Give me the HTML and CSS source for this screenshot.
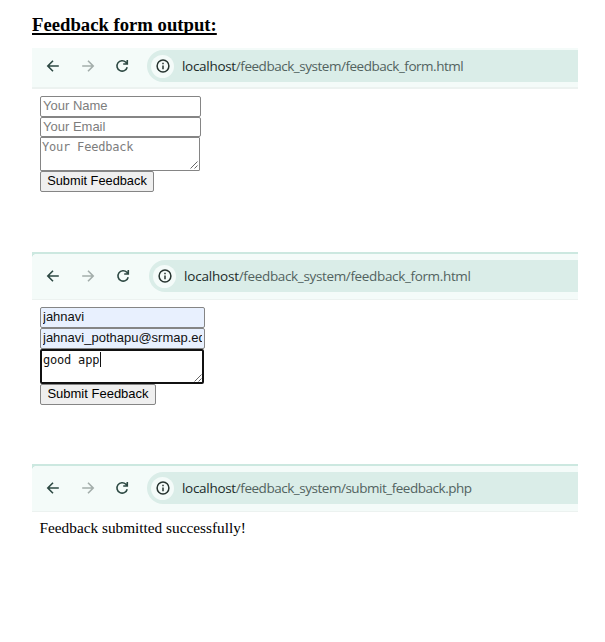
FILE: index.html
```html
<!DOCTYPE html>
<html lang="en">
<head>
<meta charset="utf-8">
<title>Feedback form output</title>
<link rel="stylesheet" href="styles.css">
</head>
<body>
<svg width="0" height="0" class="defs">
  <symbol id="back" viewBox="0 0 14 14"><path d="M12.8 7H2M7 1.8 1.8 7 7 12.2"/></symbol>
  <symbol id="forward" viewBox="0 0 14 14"><path d="M1.2 7H12M7 1.8 12.2 7 7 12.2"/></symbol>
  <symbol id="reload" viewBox="0 0 14 14"><path d="M12.2 8.2A5.2 5.2 0 1 1 10.9 3.3L12 4.4M12.3 1V5H8.2"/></symbol>
  <symbol id="info" viewBox="0 0 14 14"><circle cx="7" cy="7" r="5.9"/><path d="M7 6.4V10.2M7 3.8V5.2"/></symbol>
  <symbol id="grip" viewBox="0 0 8 8"><path d="M.5 7.5 7.5.5M4.5 7.5 7.5 4.5"/></symbol>
</svg>
<h1>Feedback form output:</h1>

<section class="shot first">
  <header class="bar">
    <svg class="icon"><use href="#back"/></svg>
    <svg class="icon off"><use href="#forward"/></svg>
    <svg class="icon"><use href="#reload"/></svg>
    <div class="address"><span class="badge"><svg class="icon"><use href="#info"/></svg></span><span class="url"><b>localhost</b>/feedback_system/feedback_form.html</span></div>
  </header>
  <form>
    <input type="text" placeholder="Your Name">
    <input type="text" placeholder="Your Email">
    <div class="area"><textarea placeholder="Your Feedback"></textarea><svg class="grip"><use href="#grip"/></svg></div>
    <button type="button">Submit Feedback</button>
  </form>
</section>

<section class="shot second">
  <header class="bar">
    <svg class="icon"><use href="#back"/></svg>
    <svg class="icon off"><use href="#forward"/></svg>
    <svg class="icon"><use href="#reload"/></svg>
    <div class="address"><span class="badge"><svg class="icon"><use href="#info"/></svg></span><span class="url"><b>localhost</b>/feedback_system/feedback_form.html</span></div>
  </header>
  <form>
    <input type="text" value="jahnavi">
    <input type="text" value="jahnavi_pothapu@srmap.edu.in">
    <div class="area"><textarea>good app</textarea><span class="caret"></span><svg class="grip"><use href="#grip"/></svg></div>
    <button type="button">Submit Feedback</button>
  </form>
</section>

<section class="shot third">
  <header class="bar">
    <svg class="icon"><use href="#back"/></svg>
    <svg class="icon off"><use href="#forward"/></svg>
    <svg class="icon"><use href="#reload"/></svg>
    <div class="address"><span class="badge"><svg class="icon"><use href="#info"/></svg></span><span class="url"><b>localhost</b>/feedback_system/submit_feedback.php</span></div>
  </header>
  <p>Feedback submitted successfully!</p>
</section>
</body>
</html>
```
FILE: styles.css
```css
* { box-sizing: border-box; }
body { margin: 0; padding: 14px 27px 0 32px; height: 642px; background: #fff; overflow: hidden; }
.defs { position: absolute; }
h1 {
  margin: 0 0 12px; height: 22px;
  font: bold 18.7px/22px "Liberation Serif", serif;
  text-decoration: underline; text-decoration-thickness: 2px; text-underline-offset: 2px;
  text-decoration-skip-ink: none; color: #000;
}
.first { height: 204px; }
.second { height: 212px; }
.bar {
  display: flex; align-items: flex-start; height: 41px;
  padding: 2px 0 0 14px; background: #f4fbf9; border-bottom: 2px solid #ecf2f0;
}
.second .bar, .third .bar {
  height: 48px; padding-top: 6px;
  border-top: 2px solid #cce8e0; border-bottom-width: 1px;
  background: radial-gradient(circle at 100% 100%, #f4fbf9 5px, #cce8e0 5.5px) 0 0 / 5px 5px no-repeat, #f4fbf9;
}
.icon {
  flex: none; width: 14px; height: 14px; margin: 8.5px 20.5px 0 0;
  fill: none; stroke: #2d4943; stroke-width: 1.6;
}
.off { stroke: #a3aeab; }
.address {
  flex: 1; display: flex; align-items: center; height: 32px; margin-left: 5px;
  padding-left: 4px; background: #daede8; border-radius: 16px 0 0 16px;
}
.badge {
  display: flex; align-items: center; justify-content: center;
  width: 23px; height: 23px; border-radius: 50%; background: #f4fbf9;
}
.icon:nth-child(3) { margin-right: 13px; }
.badge .icon { margin: 0; stroke: #26332f; stroke-width: 1.5; }
.url {
  margin-left: 8px; font: 13.5px/20px "Open Sans", sans-serif;
  letter-spacing: -.475px; white-space: nowrap; color: #52635f;
}
.url b { font-weight: 400; letter-spacing: -.3px; color: #202b28; }
.second .icon { margin-right: 21px; }
.second .icon:nth-child(3) { margin-right: 14px; }
.second .badge .icon { margin: 0; }
.second .url { letter-spacing: -.35px; }
.second .url b { letter-spacing: -.2px; }
form { display: flex; flex-direction: column; align-items: flex-start; padding: 7px 0 0 8px; }
input {
  width: 161px; height: 21px; padding: 0 2px 2px; margin: 0;
  border: 1px solid #858585; border-radius: 2px; background: #fff;
  font: 13px/17px "Liberation Sans", sans-serif; color: #111; outline: none;
}
input + input { height: 20px; }
input::placeholder, textarea::placeholder { color: #7d7d7d; opacity: 1; }
.area { position: relative; width: 160px; height: 34px; }
textarea {
  display: block; width: 100%; height: 100%; margin: 0; padding: 2px;
  border: 1px solid #858585; border-radius: 1px; resize: none; overflow: hidden; outline: none;
  font: 12px/15px "DejaVu Sans Mono", monospace; letter-spacing: -.2px; color: #111;
}
.first textarea { padding-left: 1px; }
.grip { position: absolute; right: 2px; bottom: 2px; width: 8px; height: 8px; fill: none; stroke: #666; }
button {
  width: 114px; height: 21px; margin: 0; padding: 0 0 2px; white-space: nowrap;
  border: 1px solid #858585; border-radius: 2px; background: #efefef;
  font: 12.8px/17px "Liberation Sans", sans-serif; color: #000;
}
.second input { width: 165px; height: 21px; background: #e8f0fe; }
.second .area { width: 164px; height: 35px; }
.second textarea { border: 2px solid #111; border-radius: 2px; padding: 2px 1px 1px; }
.second button { width: 116px; font-size: 13px; }
.caret { position: absolute; left: 60px; top: 3px; width: 1px; height: 15px; background: #111; }
p { margin: 7px 0 0 7.5px; font: 15.3px/18px "Liberation Serif", serif; color: #000; }
```
